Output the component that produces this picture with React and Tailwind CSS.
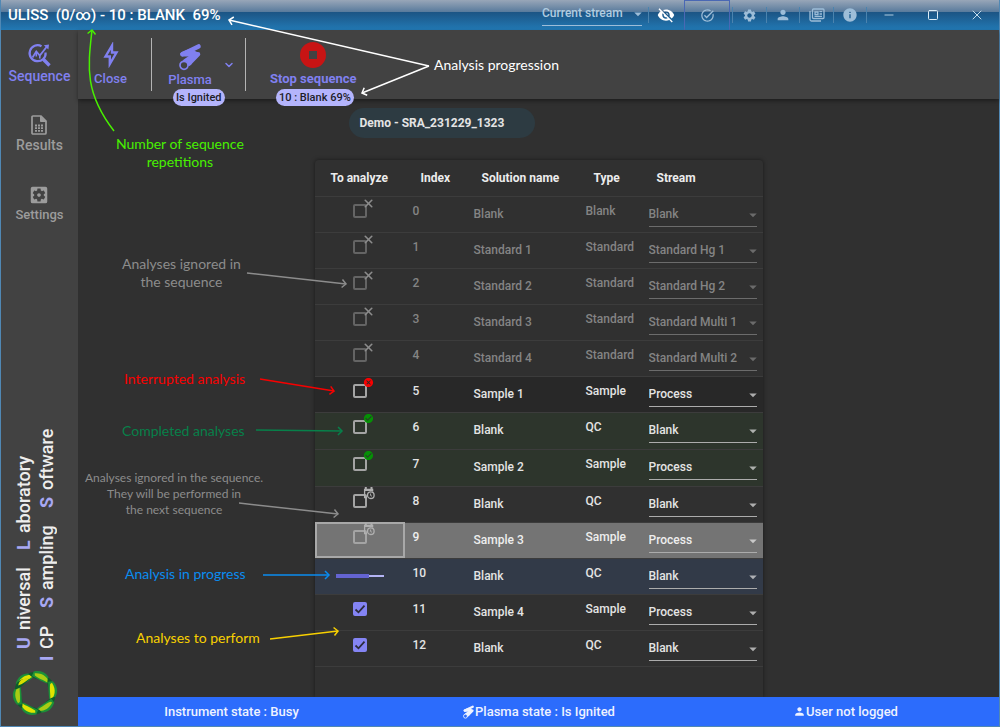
import {
  MdVisibilityOff,
  MdTaskAlt,
  MdSettings,
  MdPerson,
  MdInfo,
  MdSettingsApplications,
  MdArrowDropDown,
  MdCheckCircle,
  MdCancel,
} from "react-icons/md";
import { ChevronDown, Minus, Square, X } from "lucide-react";

const rows = [
  { index: 0, name: "Blank", type: "Blank", stream: "Blank", status: "ignored" },
  { index: 1, name: "Standard 1", type: "Standard", stream: "Standard Hg 1", status: "ignored" },
  { index: 2, name: "Standard 2", type: "Standard", stream: "Standard Hg 2", status: "ignored" },
  { index: 3, name: "Standard 3", type: "Standard", stream: "Standard Multi 1", status: "ignored" },
  { index: 4, name: "Standard 4", type: "Standard", stream: "Standard Multi 2", status: "ignored" },
  { index: 5, name: "Sample 1", type: "Sample", stream: "Process", status: "interrupted" },
  { index: 6, name: "Blank", type: "QC", stream: "Blank", status: "completed" },
  { index: 7, name: "Sample 2", type: "Sample", stream: "Process", status: "completed" },
  { index: 8, name: "Blank", type: "QC", stream: "Blank", status: "next" },
  { index: 9, name: "Sample 3", type: "Sample", stream: "Process", status: "next", selected: true },
  { index: 10, name: "Blank", type: "QC", stream: "Blank", status: "running", progress: 69 },
  { index: 11, name: "Sample 4", type: "Sample", stream: "Process", status: "todo" },
  { index: 12, name: "Blank", type: "QC", stream: "Blank", status: "todo" },
];

const rowStyles = {
  ignored: "h-[36px] text-[#848484]",
  interrupted: "h-[36px] bg-[#282828] text-[#e4e4e4]",
  completed: "h-[37px] bg-[#2d352c] text-[#e4e4e4]",
  next: "h-[36px] text-[#e4e4e4]",
  running: "h-[36px] bg-[#323a48] text-[#e4e4e4]",
  todo: "h-[36px] text-[#e4e4e4]",
};

const notes = [
  { text: ["Analysis progression"], place: "left-[434px] top-[56px] text-white" },
  { text: ["Number of sequence", "repetitions"], place: "left-[116px] top-[135px] text-[#48f000]" },
  { text: ["Analyses ignored in", "the sequence"], place: "left-[122px] top-[255px] text-[#8c8c8c]" },
  { text: ["Interrupted analysis"], place: "left-[124px] top-[370px] text-[#f80000]" },
  { text: ["Completed analyses"], place: "left-[122px] top-[422px] text-[#07804a]" },
  { text: ["Analysis in progress"], place: "left-[125px] top-[565px] text-[#0a8cf0]" },
  { text: ["Analyses to perform"], place: "left-[136px] top-[629px] text-[#f8d000]" },
];

const arrows = [
  { id: "title", d: "M429 66 L229 20", color: "#ffffff" },
  { id: "stop", d: "M429 66 L362 93", color: "#ffffff" },
  { id: "repeat", d: "M114 131 C84 92 88 66 92 30", color: "#48f000" },
  { id: "ignored", d: "M247 273 L346 284", color: "#8c8c8c" },
  { id: "interrupted", d: "M260 379 L334 391", color: "#f80000" },
  { id: "completed", d: "M256 430 L342 431", color: "#07804a" },
  { id: "next", d: "M239 503 L338 514", color: "#8c8c8c" },
  { id: "running", d: "M263 575 L329 575", color: "#0a8cf0" },
  { id: "todo", d: "M270 639 L338 631", color: "#f8d000" },
];

function SequenceIcon() {
  return (
    <svg viewBox="0 0 24 24" className="size-6" fill="none" stroke="currentColor" strokeWidth="2.2">
      <path d="M14.5 3.2A8 8 0 1 0 18.6 9.5" />
      <path d="M16.3 16.3 L22.5 22.5" strokeWidth="3.4" />
      <path d="M5.5 14.5 L9.3 8.5 L12.8 12.5 L20.5 2.8" strokeWidth="1.8" />
      <path d="M16.8 2.2 L22 1.5 L21.4 6.6 Z" fill="currentColor" stroke="none" />
      <path d="M9.3 8.5v5M12.8 12.5v3" strokeWidth="1.6" />
    </svg>
  );
}

function ReportIcon() {
  return (
    <svg viewBox="0 0 16 20" className="h-5 w-4" fill="none" stroke="currentColor" strokeWidth="1.7">
      <path d="M2 1h8l5 5v12a1 1 0 0 1-1 1H2a1 1 0 0 1-1-1V2a1 1 0 0 1 1-1z" />
      <path d="M9.5 1v5.5H15z" fill="currentColor" strokeWidth="1" />
      <path d="M4 10.5h8M4 13.2h8M4 15.9h8" strokeWidth="1.8" strokeDasharray="2 1" />
    </svg>
  );
}

function BoltIcon() {
  return (
    <svg viewBox="0 0 16 26" className="h-[26px] w-4" fill="none" stroke="currentColor" strokeWidth="2.4">
      <path d="M9 3.5 L2.5 14.5 H6.8 V22 L13.5 10.5 H9 Z" />
    </svg>
  );
}

function TorchIcon({ className, hole }) {
  return (
    <svg viewBox="0 0 24 28" className={className} fill="none" stroke="currentColor" strokeLinecap="round" strokeLinejoin="round">
      <path d="M20.5 3.5 L4.5 11.2 H20 L11 20.5" strokeWidth="4.6" />
      <path d="M4.5 11.2 L12 8 L18 11 L7 18.5 L11.5 20" strokeWidth="4.6" />
      <circle cx="6" cy="22.3" r="4" className={hole} strokeWidth="1.7" />
    </svg>
  );
}

function NewsIcon() {
  return (
    <svg viewBox="0 0 16 14" className="h-[14px] w-4" fill="none" stroke="currentColor" strokeWidth="1.3">
      <path d="M1 3v8.5a1.5 1.5 0 0 0 1.5 1.5H12" />
      <rect x="3.5" y="1" width="11.5" height="9.5" rx="1" />
      <path d="M6 4h3v2.5H6zM10.5 3.7H13M10.5 6H13M5.5 8.3H13" />
    </svg>
  );
}

function NextIcon() {
  return (
    <svg viewBox="0 0 12 13" className="h-[13px] w-3" fill="none" stroke="currentColor" strokeWidth="1.3">
      <path d="M4 10.5H1.6V2.5h8v2" />
      <path d="M1 3h9M2.8 0v3M8.5 0v3" strokeWidth="2" />
      <circle cx="7.8" cy="8.2" r="3.3" />
      <path d="M7.6 6.5v2l1.3.7" strokeWidth="1" />
    </svg>
  );
}

function Logo() {
  const segments = [0, 60, 120, 180, 240, 300];
  return (
    <svg viewBox="-25 -25 50 50" className="size-12">
      {segments.map((angle) => (
        <g key={angle} transform={`rotate(${angle})`}>
          <path d="M-20 -10 C-17 -20 -8 -23 0 -18 C-5 -13 -11 -10 -17 -6 Z" fill="#1c9038" />
          <path d="M-18 -10 C-14 -18 -7 -20 0 -18 C-6 -16 -9 -12 -16 -9 Z" fill={angle % 120 ? "#a8cc14" : "#e0e400"} />
          <path d="M-7 -20 C0 -24 7 -20 10 -12 C4 -15 -2 -14 -7 -20 Z" fill="#0c5c2a" />
          <path d="M-2 -19 C3 -21 7 -19 11 -12 C7 -14 2 -15 -2 -19 Z" fill={angle % 120 ? "#d8dc00" : "#2c9a30"} />
        </g>
      ))}
    </svg>
  );
}

function StatusMark({ status }) {
  if (status === "ignored") return <X className="-mx-[1px] size-[13px] text-[#8c8c8c]" strokeWidth={3} />;
  if (status === "interrupted") return <MdCancel className="size-[11px] text-[#f80000]" />;
  if (status === "completed") return <MdCheckCircle className="size-[11px] text-[#069006]" />;
  if (status === "next") return <NextIcon />;
  return null;
}

function AnalyzeCell({ row }) {
  if (row.status === "running") {
    return (
      <div
        role="progressbar"
        aria-label="Analysis progress"
        aria-valuenow={row.progress}
        className="mx-auto mt-[15px] flex h-1 w-12 items-center"
      >
        <div className="h-1 bg-[#6464d2]" style={{ width: `${row.progress}%` }} />
        <div className="h-[2px] flex-1 bg-[#b4b4f4]" />
      </div>
    );
  }
  const todo = row.status === "todo";
  return (
    <label className="relative mx-auto mt-[7px] block size-[14px]">
      <input
        type="checkbox"
        defaultChecked={todo}
        aria-label={`Analyze ${row.index}`}
        className={`block size-[14px] appearance-none rounded-[2px] border-2 ${
          todo
            ? "border-[#8484f4] bg-[#8484f4]"
            : row.status === "ignored"
              ? "border-[#646464]"
              : "border-[#a4a4a4]"
        }`}
      />
      {todo && (
        <svg viewBox="0 0 14 14" className="pointer-events-none absolute inset-0 size-[14px]" fill="none" stroke="#2c2c3c" strokeWidth="1.8">
          <path d="M2.5 7.5 L5.5 10.3 L11.5 3.7" />
        </svg>
      )}
      <span className="absolute -top-[7px] left-[10px] text-[#b0b0b0]">
        <StatusMark status={row.status} />
      </span>
    </label>
  );
}

function StreamSelect({ row }) {
  const ignored = row.status === "ignored";
  return (
    <div className="relative mt-[6px] w-[108px]">
      <select
        defaultValue={row.stream}
        aria-label={`Stream ${row.index}`}
        className={`block h-6 w-full appearance-none border-b bg-transparent font-medium ${
          ignored ? "border-[#6c6c6c]" : "border-[#acacac]"
        }`}
      >
        <option>{row.stream}</option>
      </select>
      <MdArrowDropDown className="pointer-events-none absolute -right-[5px] top-[3px] size-[18px] opacity-70" />
    </div>
  );
}

function SequenceTable() {
  return (
    <table className="w-full table-fixed border-collapse text-left text-[12px] leading-4">
      <colgroup>
        <col className="w-[90px]" />
        <col className="w-[61px]" />
        <col className="w-[112px]" />
        <col className="w-[63px]" />
        <col />
      </colgroup>
      <thead>
        <tr className="h-[36px] text-[#ececec]">
          {["To analyze", "Index", "Solution name", "Type", "Stream"].map((title) => (
            <th key={title} className="whitespace-nowrap pl-4 font-bold">
              {title}
            </th>
          ))}
        </tr>
      </thead>
      <tbody>
        {rows.map((row) => (
          <tr
            key={row.index}
            className={`border-t border-[#3c3c3c] align-top font-medium ${
              row.selected ? "h-[36px] bg-[#747474] text-[#eeeeee]" : rowStyles[row.status]
            }`}
          >
            <td className={row.selected ? "outline-2 -outline-offset-2 outline-[#a8a8a8]" : ""}>
              <AnalyzeCell row={row} />
            </td>
            <td className="pl-2 pt-[6px]">{row.index}</td>
            <td className="pl-2 pt-[9px]">{row.name}</td>
            <td className="pl-2 pt-[6px]">{row.type}</td>
            <td className="pl-2">
              <StreamSelect row={row} />
            </td>
          </tr>
        ))}
        <tr className="border-t border-[#3c3c3c]">
          <td colSpan={5} />
        </tr>
      </tbody>
    </table>
  );
}

function TitleBar() {
  return (
    <header className="flex h-[30px] items-center bg-[linear-gradient(to_bottom,#98a6b8,#587a9c_12px,#1c5484_12px,#2279b4_30px)] pl-[7px]">
      <h1 className="whitespace-pre text-[15px] font-medium text-white">{"ULISS  (0/∞) - 10 : BLANK  69%"}</h1>
      <div className="ml-auto flex h-full items-center text-[#9dbdd8]">
        <label className="relative mb-[3px] mr-[6px] block w-[100px]">
          <select
            aria-label="Current stream"
            className="block h-6 w-full appearance-none border-b border-[#9dbdd8] text-[12px] font-medium text-[#b0cce0]"
          >
            <option>Current stream</option>
          </select>
          <MdArrowDropDown className="pointer-events-none absolute -right-[5px] top-[3px] size-[18px]" />
        </label>
        <button aria-label="Hide" className="flex h-4 w-[34px] items-center justify-center border-l border-[#4b83ae] text-white">
          <MdVisibilityOff className="size-[18px]" />
        </button>
        <button aria-label="Validate" className="mx-[2px] flex h-full w-[46px] items-center justify-center border-x border-t border-[#4a68b4]">
          <MdTaskAlt className="size-[15px]" />
        </button>
        <button aria-label="Settings" className="flex h-4 w-[34px] items-center justify-center border-l border-[#4b83ae]">
          <MdSettings className="size-[15px]" />
        </button>
        <button aria-label="User" className="flex h-4 w-[33px] items-center justify-center border-l border-[#4b83ae]">
          <MdPerson className="size-4" />
        </button>
        <button aria-label="News" className="flex h-4 w-[34px] items-center justify-center border-l border-[#4b83ae]">
          <NewsIcon />
        </button>
        <button aria-label="About" className="flex h-4 w-[34px] items-center justify-center border-x border-[#4b83ae]">
          <MdInfo className="size-4" />
        </button>
        <button aria-label="Minimize" className="flex w-[44px] justify-center text-[#c4dcec]">
          <Minus className="size-[14px]" strokeWidth={1.5} />
        </button>
        <button aria-label="Maximize" className="flex w-[44px] justify-center text-[#dcecf6]">
          <Square className="size-3" strokeWidth={2} />
        </button>
        <button aria-label="Close window" className="flex w-[44px] justify-center text-[#c4dcec]">
          <X className="size-4" strokeWidth={1.5} />
        </button>
      </div>
    </header>
  );
}

function Sidebar() {
  return (
    <aside className="flex w-[77px] shrink-0 flex-col items-center bg-[#424242] text-[14px] font-medium text-[#9c9c9c]">
      <nav className="flex flex-col items-center">
        <button className="flex h-[70px] flex-col items-center pt-[13px] leading-4 text-[#8080f0]">
          <SequenceIcon />
          <span className="mt-[1px]">Sequence</span>
        </button>
        <button className="flex h-[70px] flex-col items-center pt-[15px] leading-4">
          <ReportIcon />
          <span className="mt-[2px]">Results</span>
        </button>
        <button className="flex h-[70px] flex-col items-center pt-[14px] text-[13px] leading-4">
          <MdSettingsApplications className="size-[22px]" />
          <span className="mt-[1px]">Settings</span>
        </button>
      </nav>
      {/* vertical text: margin-top is the gap before each initial */}
      <div className="mr-[10px] mt-auto flex rotate-180 flex-col text-[18px] font-medium leading-[23px] text-[#eeeeee] [writing-mode:vertical-rl]">
        <p className="flex gap-[7px] pt-3">
          <b className="text-[#a8a8f4]">U</b> niversal
          <b className="mt-[10px] text-[#a8a8f4]">L</b> aboratory
        </p>
        <p className="flex gap-[7px]">
          <b className="text-[#a8a8f4]">I</b> CP
          <b className="mt-[10px] text-[#a8a8f4]">S</b> ampling
          <b className="mt-[10px] text-[#a8a8f4]">S</b> oftware
        </p>
      </div>
      <div className="mb-[9px] mr-[10px] mt-[8px]">
        <Logo />
      </div>
    </aside>
  );
}

function Toolbar() {
  return (
    <div className="relative flex h-[69px] shrink-0 bg-[#424242] text-[13px] font-medium leading-4 text-[#8080f0] shadow-[0_2px_4px_rgba(0,0,0,0.4)]">
      <button className="flex w-[65px] flex-col items-center pt-[12px]">
        <BoltIcon />
        <span className="mt-[3px]">Close</span>
      </button>
      <div className="ml-2 mt-2 h-[53px] w-[1px] bg-[#b4b4b4]" />
      <button className="relative ml-[5px] flex w-[66px] flex-col items-center pt-[13px]">
        <TorchIcon className="h-7 w-6" hole="fill-[#424242]" />
        <span className="mt-[1px]">Plasma</span>
        <span className="absolute left-4 top-[59px] whitespace-nowrap rounded-full bg-[#b4b4fc] px-[3px] text-[11px] leading-[17px] text-[#1c1c28]">
          Is Ignited
        </span>
      </button>
      <button aria-label="Plasma menu" className="mr-[10px] mt-[29px] flex h-3 items-center">
        <ChevronDown className="size-3" strokeWidth={3} />
      </button>
      <div className="mt-2 h-[53px] w-[1px] bg-[#b4b4b4]" />
      <button className="relative ml-[24px] flex flex-col items-center pt-[12px] font-bold">
        <svg viewBox="0 0 26 26" className="size-[26px]">
          <circle cx="13" cy="13" r="13" fill="#c81414" />
          <rect x="9" y="9" width="8" height="8" fill="#424242" />
        </svg>
        <span className="mt-[3px]">Stop sequence</span>
        <span className="absolute left-[6px] top-[59px] whitespace-nowrap rounded-full bg-[#b4b4fc] px-[3px] text-[11px] font-medium leading-[17px] text-[#1c1c28]">
          10 : Blank 69%
        </span>
      </button>
    </div>
  );
}

function Annotations() {
  return (
    <div className="pointer-events-none absolute -inset-x-px inset-y-0 font-['Lato',sans-serif] text-[14px] leading-[18px]">
      <svg className="size-full" fill="none" strokeWidth="1.5">
        {arrows.map((arrow) => (
          <g key={arrow.id} stroke={arrow.color}>
            <marker id={arrow.id} markerUnits="userSpaceOnUse" markerWidth="10" markerHeight="12" refX="7" refY="6" orient="auto">
              <path d="M3 2 L7 6 L3 10" stroke={arrow.color} strokeWidth="1.5" />
            </marker>
            <path d={arrow.d} markerEnd={`url(#${arrow.id})`} />
          </g>
        ))}
      </svg>
      {notes.map((note) => (
        <p key={note.text[0]} className={`absolute whitespace-nowrap text-center ${note.place}`}>
          {note.text.map((line) => (
            <span key={line} className="block">
              {line}
            </span>
          ))}
        </p>
      ))}
      <p className="absolute left-[85px] top-[470px] whitespace-nowrap text-center text-[12px] leading-4 text-[#8c8c8c]">
        Analyses ignored in the sequence.
        <br />
        They will be performed in
        <br />
        the next sequence
      </p>
    </div>
  );
}

export default function App() {
  return (
    <div className="relative flex min-h-screen flex-col border-x border-b border-[#5088b4] bg-[#303030] font-['Roboto',sans-serif]">
      <TitleBar />
      <div className="flex flex-1">
        <Sidebar />
        <div className="flex min-w-0 flex-1 flex-col">
          <Toolbar />
          <main className="mx-auto flex w-[448px] flex-1 flex-col pt-[9px]">
            <div className="ml-[34px] h-[30px] w-[186px] rounded-full bg-[#2d3b42] pl-[11px] text-[12px] font-bold leading-[30px] text-[#e4e4e4]">
              Demo - SRA_231229_1323
            </div>
            <section className="mt-[22px] flex-1 rounded-t shadow-[0_0_4px_rgba(0,0,0,0.5)]">
              <SequenceTable />
            </section>
          </main>
          <footer className="relative grid h-[29px] grid-cols-3 items-center bg-[#2c6cfc] text-[13px] font-medium text-[#eef2ff]">
            <p className="text-center">Instrument state : Busy</p>
            <p className="flex items-center justify-center">
              <TorchIcon className="h-[14px] w-[13px]" hole="fill-[#2c6cfc]" />
              Plasma state : Is Ignited
            </p>
            <p className="flex items-center justify-center">
              <MdPerson className="size-[13px]" />
              User not logged
            </p>
          </footer>
        </div>
      </div>
      <Annotations />
    </div>
  );
}
